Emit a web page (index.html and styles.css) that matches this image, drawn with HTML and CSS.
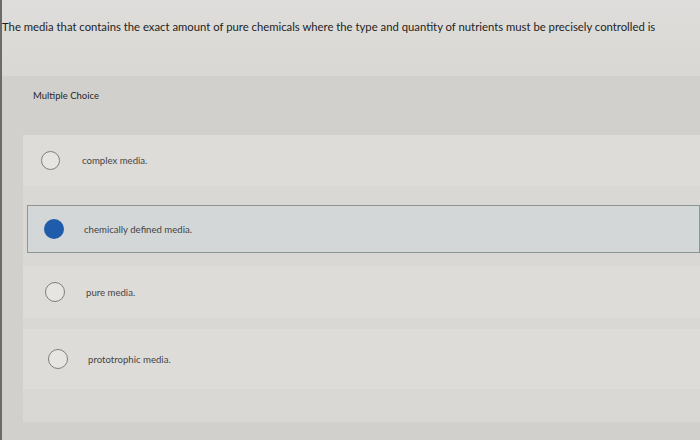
FILE: index.html
```html
<!DOCTYPE html>
<html>
<head>
<meta charset="utf-8">
<link rel="stylesheet" href="styles.css">
</head>
<body>
<div class="page">
  <div class="question">The media that contains the exact amount of pure chemicals where the type and quantity of nutrients must be precisely controlled is</div>
  <div class="panel">
    <div class="label">Multiple Choice</div>
    <div class="options">
      <div class="option opt1"><span class="radio"></span><span class="text">complex media.</span></div>
      <div class="option opt2 selected"><span class="radio"></span><span class="text">chemically defined media.</span></div>
      <div class="option opt3"><span class="radio"></span><span class="text">pure media.</span></div>
      <div class="option opt4"><span class="radio"></span><span class="text">prototrophic media.</span></div>
    </div>
  </div>
</div>
</body>
</html>
```

FILE: styles.css
```css
html, body {
  margin: 0;
  padding: 0;
  height: 100%;
}
body {
  background: #d9d8d4;
  font-family: "Lato", "Open Sans", sans-serif;
  overflow: hidden;
}
.page {
  height: 440px;
  border-left: 2px solid #6b6b6b;
  display: flex;
  flex-direction: column;
}
.question {
  height: 76px;
  box-sizing: border-box;
  padding-top: 20px;
  font-size: 11.3px;
  color: #1e1e1e;
  background: linear-gradient(#dedddb, #d9d8d4);
  white-space: nowrap;
}
.panel {
  flex: 1;
  background: #d1d0cc;
  padding: 14px 0 0 1px;
  display: flex;
  flex-direction: column;
}
.label {
  margin-left: 30px;
  font-size: 9.5px;
  color: #262626;
  line-height: 12px;
}
.options {
  margin: 33px 0 18px 20px;
  flex: 1;
  background: #d9d8d4;
  display: flex;
  flex-direction: column;
}
.option {
  display: flex;
  align-items: center;
  background: #dedcd9;
  box-sizing: border-box;
}
.radio {
  width: 19px;
  height: 19px;
  border: 1px solid #7e7e7e;
  border-radius: 50%;
  background: #e6e5e2;
  flex: none;
  box-sizing: border-box;
}
.text {
  font-size: 9.6px;
  color: #454545;
}
.opt1 {
  height: 51px;
  padding-left: 18px;
  gap: 22px;
}
.opt2 {
  margin-top: 19px;
  margin-left: 4px;
  height: 48px;
  padding-left: 16px;
  gap: 20px;
  border: 1px solid #8d9494;
  background: #d3d7d8;
}
.opt2 .radio {
  width: 20px;
  height: 20px;
  border: none;
  background: #1f5cab;
}
.opt3 {
  margin-top: 13px;
  height: 52px;
  padding-left: 22px;
  gap: 21px;
}
.opt3 .radio, .opt4 .radio {
  width: 20px;
  height: 20px;
}
.opt4 {
  margin-top: 11px;
  height: 60px;
  padding-left: 25px;
  gap: 20px;
}
```
